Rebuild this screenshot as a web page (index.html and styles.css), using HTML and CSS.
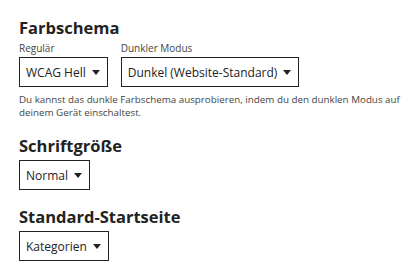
FILE: index.html
```html
<!DOCTYPE html>
<html lang="de">
<head>
<meta charset="utf-8">
<link rel="stylesheet" href="styles.css">
</head>
<body>
<div class="page">
  <section class="section">
    <h2 class="title">Farbschema</h2>
    <div class="row">
      <div class="field">
        <div class="label">Regulär</div>
        <div class="select">WCAG Hell <svg class="caret" width="8" height="5" viewBox="0 0 8 5"><path d="M0 0H8L4 5Z"/></svg></div>
      </div>
      <div class="field">
        <div class="label">Dunkler Modus</div>
        <div class="select">Dunkel (Website-Standard) <svg class="caret" width="8" height="5" viewBox="0 0 8 5"><path d="M0 0H8L4 5Z"/></svg></div>
      </div>
    </div>
    <p class="help">Du kannst das dunkle Farbschema ausprobieren, indem du den dunklen Modus auf deinem Gerät einschaltest.</p>
  </section>
  <section class="section">
    <h2 class="title">Schriftgröße</h2>
    <div class="select">Normal <svg class="caret" width="8" height="5" viewBox="0 0 8 5"><path d="M0 0H8L4 5Z"/></svg></div>
  </section>
  <section class="section">
    <h2 class="title">Standard-Startseite</h2>
    <div class="select">Kategorien <svg class="caret" width="8" height="5" viewBox="0 0 8 5"><path d="M0 0H8L4 5Z"/></svg></div>
  </section>
</div>
</body>
</html>
```
FILE: styles.css
```css
html, body {
  margin: 0;
  padding: 0;
  background: #fff;
}
body {
  font-family: "Open Sans", "Noto Sans", sans-serif;
  color: #222;
}
.page {
  padding: 18px 6px 0 19px;
  display: flex;
  flex-direction: column;
  gap: 17px;
}
.section {
  display: flex;
  flex-direction: column;
  align-items: flex-start;
}
.title {
  margin: 0 0 4px;
  font-size: 16.5px;
  font-weight: 700;
  line-height: 20px;
}
.row {
  display: flex;
  gap: 13px;
}
.field {
  display: flex;
  flex-direction: column;
  align-items: flex-start;
}
.label {
  font-size: 10px;
  line-height: 13px;
  color: #444;
  margin-bottom: 2px;
}
.select {
  box-sizing: border-box;
  height: 30px;
  display: flex;
  align-items: center;
  gap: 6px;
  padding: 0 7px 0 6px;
  border: 1px solid #222;
  font-size: 12px;
  color: #222;
  white-space: nowrap;
}
.caret {
  fill: #222;
  display: block;
}
.help {
  margin: 6px 0 0;
  font-size: 9.8px;
  line-height: 13px;
  color: #444;
  max-width: 386px;
}
```
